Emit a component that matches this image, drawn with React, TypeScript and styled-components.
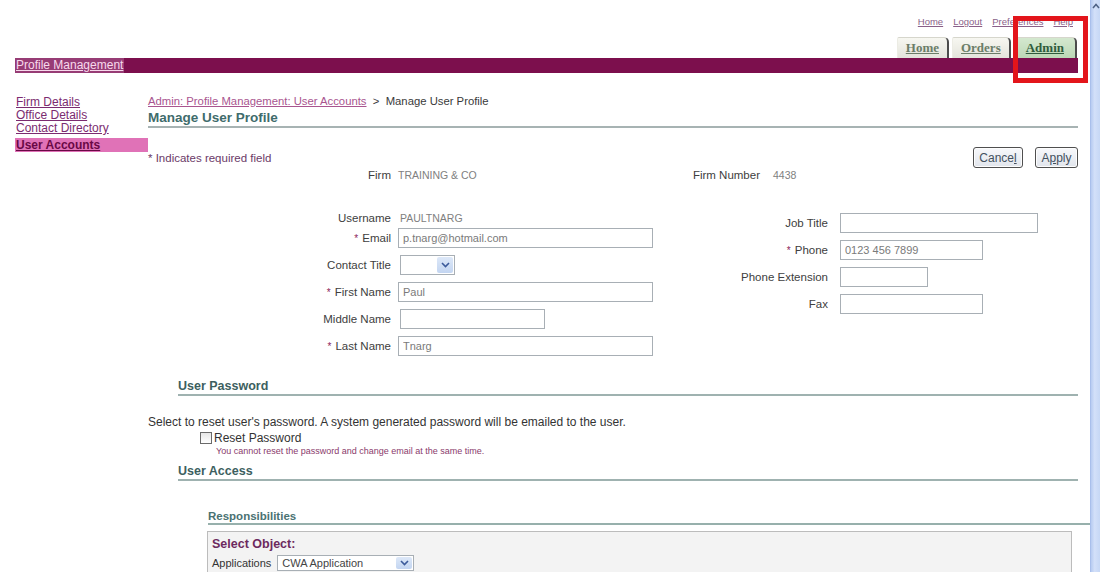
import styled, { createGlobalStyle } from 'styled-components';

const GlobalStyle = createGlobalStyle`
  html, body {
    margin: 0;
    padding: 0;
    background: #fff;
  }
  body {
    font-family: "Liberation Sans", Arial, sans-serif;
    color: #333;
  }
  * { box-sizing: border-box; }
`;

const Window = styled.div`
  position: relative;
  display: grid;
  grid-template-columns: 1090px 10px;
  width: 1100px;
  height: 572px;
  overflow: hidden;
  background: #fff;
`;

const Page = styled.div`
  display: flex;
  flex-direction: column;
  min-width: 0;
  overflow: hidden;
`;

const Scrollbar = styled.div`
  width: 10px;
  height: 572px;
  background: linear-gradient(90deg, #b7cbf1, #d3e0f9 40%, #c6d7f5);
  border-left: 1px solid #a9bfeb;
  display: flex;
  justify-content: center;
  padding-top: 3px;
`;

const UtilityLinks = styled.nav`
  display: flex;
  justify-content: flex-end;
  gap: 10px;
  padding: 16px 17px 0 0;
  font-size: 9.5px;
  line-height: 12px;
`;

const UtilityLink = styled.a`
  color: #8a5f88;
  text-decoration: underline;
`;

const Tabs = styled.div`
  display: flex;
  justify-content: flex-end;
  gap: 3px;
  margin-top: 9px;
  padding-right: 13px;
`;

const Tab = styled.a<{ $active?: boolean }>`
  height: 21px;
  padding: 0 ${p => (p.$active ? '11px' : '8px')};
  display: flex;
  align-items: center;
  font-family: "Liberation Serif", "Times New Roman", serif;
  font-weight: bold;
  font-size: 13px;
  text-decoration: underline;
  color: ${p => (p.$active ? '#2f5c3c' : '#6b7d68')};
  background: ${p =>
    p.$active
      ? 'linear-gradient(#d4e8cf, #bcd8b6)'
      : 'linear-gradient(#f7f7f1, #e4e4dc)'};
  border-top: 1px solid #d6d6cc;
  border-left: 1px solid #ecece4;
  border-right: 2px solid #4c4c4c;
  border-top-right-radius: 5px;
  border-top-left-radius: 2px;
`;

const SectionBar = styled.div`
  height: 15px;
  margin: 0 12px 0 15px;
  background: #7c0f4d;
  display: flex;
`;

const SectionTitle = styled.a`
  padding: 0 1px;
  background: #973c75;
  color: #f7d9ec;
  font-size: 12px;
  line-height: 15px;
  text-decoration: underline;
`;

const Body = styled.div`
  flex: 1;
  display: flex;
  padding-left: 15px;
`;

const SideNav = styled.nav`
  width: 133px;
  flex-shrink: 0;
  padding-top: 23px;
  display: flex;
  flex-direction: column;
`;

const NavLink = styled.a<{ $active?: boolean }>`
  font-size: 12px;
  line-height: ${p => (p.$active ? '14px' : '13px')};
  margin-top: ${p => (p.$active ? '3px' : '0')};
  color: ${p => (p.$active ? '#6a0846' : '#7b2b70')};
  font-weight: ${p => (p.$active ? 'bold' : 'normal')};
  background: ${p => (p.$active ? '#e072b7' : 'transparent')};
  text-decoration: underline;
  padding-left: 1px;
`;

const Content = styled.main`
  flex: 1;
  min-width: 0;
  padding: 22px 12px 0 0;
  display: flex;
  flex-direction: column;
`;

const Breadcrumb = styled.div`
  font-size: 11.3px;
  line-height: 13px;
  color: #3a3a3a;
`;

const CrumbLink = styled.a`
  color: #a9558f;
  text-decoration: underline;
`;

const PageTitle = styled.h1`
  margin: 2px 0 0;
  font-size: 13.5px;
  line-height: 16px;
  font-weight: bold;
  color: #3f6c6c;
  border-bottom: 2px solid #a7b3b3;
`;

const ActionsRow = styled.div`
  margin-top: 19px;
  height: 21px;
  display: flex;
  justify-content: space-between;
  align-items: center;
`;

const RequiredNote = styled.span`
  font-size: 11.5px;
  color: #6b3a68;
`;

const Buttons = styled.div`
  display: flex;
  gap: 12px;
`;

const Button = styled.button<{ $w: number }>`
  width: ${p => p.$w}px;
  height: 21px;
  padding: 0;
  font-family: "Liberation Sans", Arial, sans-serif;
  font-size: 12px;
  color: #43505e;
  background: linear-gradient(#f7f8fb, #e1e5ec);
  border: 1px solid #4f4f4f;
  border-radius: 3px;
  box-shadow: inset 0 0 0 1px #fdfdfd;

  u { text-decoration: underline; }
`;

const InfoRow = styled.div`
  display: grid;
  grid-template-columns: 243px 258px 111px auto;
  line-height: 13px;
  margin-top: 1px;
`;

const InfoLabel = styled.span`
  text-align: right;
  font-size: 11.5px;
  color: #404040;
`;

const InfoValue = styled.span<{ $pad: number }>`
  padding-left: ${p => p.$pad}px;
  font-size: 10.5px;
  color: #808080;
`;

const FormColumns = styled.div`
  display: flex;
  margin-top: 19px;
`;

const FieldColumn = styled.div<{ $width?: number; $labelWidth: number; $gap: number; $top: number }>`
  ${p => (p.$width ? `width: ${p.$width}px;` : 'flex: 1;')}
  display: grid;
  grid-template-columns: ${p => p.$labelWidth}px 1fr;
  column-gap: ${p => p.$gap}px;
  grid-auto-rows: 27px;
  align-items: start;
  padding-top: ${p => p.$top}px;
`;

const FieldLabel = styled.label<{ $bottom?: boolean }>`
  text-align: right;
  font-size: 11.5px;
  line-height: 20px;
  color: #404040;
  white-space: nowrap;
  align-self: ${p => (p.$bottom ? 'end' : 'start')};
`;

const Req = styled.span`
  color: #8c1d5c;
  font-size: 10px;
  margin-right: 4px;
`;

const StaticValue = styled.span`
  font-size: 10.5px;
  line-height: 20px;
  color: #808080;
  align-self: end;
  padding-left: 2px;
`;

const TextInput = styled.input<{ $w: number; $shift?: number }>`
  width: ${p => p.$w}px;
  height: 20px;
  margin-left: ${p => p.$shift ?? 0}px;
  padding: 0 4px;
  border: 1px solid #a8afb5;
  font-family: "Liberation Sans", Arial, sans-serif;
  font-size: 11px;
  color: #7a7a7a;
  background: #fff;
  outline: none;
`;

const SelectBox = styled.div<{ $w: number; $h: number; $shift?: number }>`
  width: ${p => p.$w}px;
  height: ${p => p.$h}px;
  margin-left: ${p => p.$shift ?? 0}px;
  display: flex;
  align-items: stretch;
  border: 1px solid #a8afb5;
  background: #fff;
  font-size: 11px;
  color: #444;
`;

const SelectText = styled.span`
  flex: 1;
  padding-left: 4px;
  display: flex;
  align-items: center;
`;

const SelectButton = styled.span`
  width: 16px;
  margin: 1px;
  display: flex;
  align-items: center;
  justify-content: center;
  background: linear-gradient(#dde8f8, #c3d5f1);
  border-radius: 2px;
`;

const SectionHeading = styled.h2<{ $indent: number; $size: number }>`
  margin: 0 0 0 ${p => p.$indent}px;
  font-size: ${p => p.$size}px;
  line-height: 16px;
  font-weight: bold;
  color: #3d5f5f;
  border-bottom: 2px solid #9fb2b0;
`;

const PasswordSection = styled.section`
  margin-top: 15px;
`;

const Paragraph = styled.p`
  margin: 19px 0 0;
  font-size: 12px;
  line-height: 14px;
  color: #333;
`;

const CheckRow = styled.label`
  margin: 2px 0 0 52px;
  display: flex;
  align-items: center;
  gap: 2px;
  font-size: 12px;
  line-height: 14px;
  color: #333;
`;

const CheckBox = styled.span`
  width: 12px;
  height: 12px;
  border: 1px solid #6a6a6a;
  background: linear-gradient(#e6e6e6, #ffffff);
`;

const Hint = styled.div`
  margin: 1px 0 0 68px;
  font-size: 9px;
  line-height: 11px;
  color: #8a3b6c;
`;

const AccessSection = styled.section`
  margin-top: 6px;
  display: flex;
  flex-direction: column;
`;

const SubHeading = styled.h3`
  margin: 28px -12px 0 60px;
  font-size: 11.5px;
  line-height: 14px;
  font-weight: bold;
  color: #4a7272;
  border-bottom: 2px solid #97b0ac;
`;

const ObjectPanel = styled.div`
  margin: 6px 6px 0 59px;
  height: 80px;
  padding: 5px 4px;
  background: #f3f3f3;
  border: 1px solid #bcbcbc;
`;

const PanelTitle = styled.div`
  font-size: 12.5px;
  line-height: 15px;
  font-weight: bold;
  color: #6d2a5e;
`;

const PanelRow = styled.div`
  margin-top: 3px;
  display: flex;
  align-items: center;
  gap: 6px;
  font-size: 11px;
  color: #333;
`;

const Annotation = styled.div`
  position: absolute;
  left: 1013px;
  top: 16px;
  width: 75px;
  height: 67px;
  border: 5px solid #e3151b;
  pointer-events: none;
`;

const Chevron = () => (
  <svg width="9" height="6" viewBox="0 0 9 6">
    <path d="M1 1 L4.5 4.5 L8 1" fill="none" stroke="#3c5a9a" strokeWidth="1.6" />
  </svg>
);

const Dropdown = ({ w, h, value, shift }: { w: number; h: number; value?: string; shift?: number }) => (
  <SelectBox $w={w} $h={h} $shift={shift}>
    <SelectText>{value}</SelectText>
    <SelectButton>
      <Chevron />
    </SelectButton>
  </SelectBox>
);

const App = () => (
  <>
    <GlobalStyle />
    <Window>
      <Page>
        <UtilityLinks>
          <UtilityLink>Home</UtilityLink>
          <UtilityLink>Logout</UtilityLink>
          <UtilityLink>Preferences</UtilityLink>
          <UtilityLink>Help</UtilityLink>
        </UtilityLinks>
        <Tabs>
          <Tab>Home</Tab>
          <Tab>Orders</Tab>
          <Tab $active>Admin</Tab>
        </Tabs>
        <SectionBar>
          <SectionTitle>Profile Management</SectionTitle>
        </SectionBar>
        <Body>
          <SideNav>
            <NavLink>Firm Details</NavLink>
            <NavLink>Office Details</NavLink>
            <NavLink>Contact Directory</NavLink>
            <NavLink $active>User Accounts</NavLink>
          </SideNav>
          <Content>
            <Breadcrumb>
              <CrumbLink>Admin: Profile Management: User Accounts</CrumbLink>
              &nbsp; &gt; &nbsp;Manage User Profile
            </Breadcrumb>
            <PageTitle>Manage User Profile</PageTitle>

            <ActionsRow>
              <RequiredNote>* Indicates required field</RequiredNote>
              <Buttons>
                <Button $w={50}>Cance<u>l</u></Button>
                <Button $w={43}>A<u>p</u>ply</Button>
              </Buttons>
            </ActionsRow>

            <InfoRow>
              <InfoLabel>Firm</InfoLabel>
              <InfoValue $pad={7}>TRAINING &amp; CO</InfoValue>
              <InfoLabel>Firm Number</InfoLabel>
              <InfoValue $pad={13}>4438</InfoValue>
            </InfoRow>

            <FormColumns>
              <FieldColumn $width={512} $labelWidth={243} $gap={7} $top={0}>
                <FieldLabel $bottom>Username</FieldLabel>
                <StaticValue>PAULTNARG</StaticValue>

                <FieldLabel><Req>*</Req>Email</FieldLabel>
                <TextInput $w={255} defaultValue="p.tnarg@hotmail.com" />

                <FieldLabel>Contact Title</FieldLabel>
                <Dropdown w={55} h={20} shift={2} />

                <FieldLabel><Req>*</Req>First Name</FieldLabel>
                <TextInput $w={255} defaultValue="Paul" />

                <FieldLabel>Middle Name</FieldLabel>
                <TextInput $w={145} $shift={2} />

                <FieldLabel><Req>*</Req>Last Name</FieldLabel>
                <TextInput $w={255} defaultValue="Tnarg" />
              </FieldColumn>

              <FieldColumn $labelWidth={168} $gap={12} $top={12}>
                <FieldLabel>Job Title</FieldLabel>
                <TextInput $w={198} />

                <FieldLabel><Req>*</Req>Phone</FieldLabel>
                <TextInput $w={143} defaultValue="0123 456 7899" />

                <FieldLabel>Phone Extension</FieldLabel>
                <TextInput $w={88} />

                <FieldLabel>Fax</FieldLabel>
                <TextInput $w={143} />
              </FieldColumn>
            </FormColumns>

            <PasswordSection>
              <SectionHeading $indent={30} $size={12.5}>User Password</SectionHeading>
              <Paragraph>
                Select to reset user's password. A system generated password will be emailed to the user.
              </Paragraph>
              <CheckRow>
                <CheckBox />
                Reset Password
              </CheckRow>
              <Hint>You cannot reset the password and change email at the same time.</Hint>
            </PasswordSection>

            <AccessSection>
              <SectionHeading $indent={30} $size={12.5}>User Access</SectionHeading>
              <SubHeading>Responsibilities</SubHeading>
              <ObjectPanel>
                <PanelTitle>Select Object:</PanelTitle>
                <PanelRow>
                  Applications
                  <Dropdown w={137} h={16} value="CWA Application" />
                </PanelRow>
              </ObjectPanel>
            </AccessSection>
          </Content>
        </Body>
      </Page>
      <Scrollbar>
        <svg width="8" height="6" viewBox="0 0 8 6">
          <path d="M1 5 L4 1.5 L7 5" fill="none" stroke="#4d6185" strokeWidth="1.5" />
        </svg>
      </Scrollbar>
      <Annotation />
    </Window>
  </>
);

export default App;
